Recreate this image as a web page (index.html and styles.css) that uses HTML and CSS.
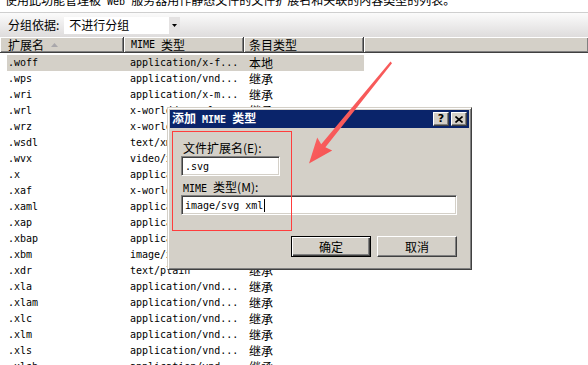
FILE: index.html
```html
<!DOCTYPE html>
<html lang="zh-CN">
<head>
<meta charset="utf-8">
<title>MIME 类型</title>
<link rel="stylesheet" href="styles.css">
</head>
<body>
<div class="page">
  <div class="desc"><span class="desc-text">使用此功能管理被<span class="mono"> Web </span>服务器用作静态文件的文件扩展名和关联的内容类型的列表。</span></div>
  <div class="toolbar">
    <span class="tlabel">分组依据:</span>
    <div class="combo">
      <span class="combo-text">不进行分组</span>
      <span class="combo-btn"><svg width="5" height="3" viewBox="0 0 5 3"><path d="M0 0H5L2.5 3Z" fill="#000"/></svg></span>
    </div>
  </div>
  <div class="header">
    <div class="hcell h1">扩展名<svg class="sort" width="7" height="4" viewBox="0 0 7 4"><path d="M0 4H7L3.5 0Z" fill="#a9a7ab"/></svg></div>
    <div class="hcell h2"><span class="mono">MIME&nbsp;</span>类型</div>
    <div class="hcell h3">条目类型</div>
    <div class="hcell h4"></div>
  </div>
  <div class="list">
    <div class="row sel"><span class="c1 mono">.woff</span><span class="c2 mono">application/x-f...</span><span class="c3">本地</span></div>
    <div class="row"><span class="c1 mono">.wps</span><span class="c2 mono">application/vnd...</span><span class="c3">继承</span></div>
    <div class="row"><span class="c1 mono">.wri</span><span class="c2 mono">application/x-m...</span><span class="c3">继承</span></div>
    <div class="row"><span class="c1 mono">.wrl</span><span class="c2 mono">x-world/x-vrml</span><span class="c3">继承</span></div>
    <div class="row"><span class="c1 mono">.wrz</span><span class="c2 mono">x-world/x-vrml</span><span class="c3">继承</span></div>
    <div class="row"><span class="c1 mono">.wsdl</span><span class="c2 mono">text/xml</span><span class="c3">继承</span></div>
    <div class="row"><span class="c1 mono">.wvx</span><span class="c2 mono">video/x-ms-wvx</span><span class="c3">继承</span></div>
    <div class="row"><span class="c1 mono">.x</span><span class="c2 mono">application/dir...</span><span class="c3">继承</span></div>
    <div class="row"><span class="c1 mono">.xaf</span><span class="c2 mono">x-world/x-vrml</span><span class="c3">继承</span></div>
    <div class="row"><span class="c1 mono">.xaml</span><span class="c2 mono">application/xam...</span><span class="c3">继承</span></div>
    <div class="row"><span class="c1 mono">.xap</span><span class="c2 mono">application/x-s...</span><span class="c3">继承</span></div>
    <div class="row"><span class="c1 mono">.xbap</span><span class="c2 mono">application/x-m...</span><span class="c3">继承</span></div>
    <div class="row"><span class="c1 mono">.xbm</span><span class="c2 mono">image/x-xbitmap</span><span class="c3">继承</span></div>
    <div class="row"><span class="c1 mono">.xdr</span><span class="c2 mono">text/plain</span><span class="c3">继承</span></div>
    <div class="row"><span class="c1 mono">.xla</span><span class="c2 mono">application/vnd...</span><span class="c3">继承</span></div>
    <div class="row"><span class="c1 mono">.xlam</span><span class="c2 mono">application/vnd...</span><span class="c3">继承</span></div>
    <div class="row"><span class="c1 mono">.xlc</span><span class="c2 mono">application/vnd...</span><span class="c3">继承</span></div>
    <div class="row"><span class="c1 mono">.xlm</span><span class="c2 mono">application/vnd...</span><span class="c3">继承</span></div>
    <div class="row"><span class="c1 mono">.xls</span><span class="c2 mono">application/vnd...</span><span class="c3">继承</span></div>
    <div class="row"><span class="c1 mono">.xlsb</span><span class="c2 mono">application/vnd...</span><span class="c3">继承</span></div>
  </div>

  <div class="dialog">
    <div class="titlebar">
      <span class="title">添加<span class="mono-b"> MIME </span>类型</span>
      <span class="tbtn q">?</span>
      <span class="tbtn x"><svg width="8" height="7" viewBox="0 0 8 7"><path d="M0.5 0.5L7.5 6.5M7.5 0.5L0.5 6.5" stroke="#000" stroke-width="1.6"/></svg></span>
    </div>
    <div class="dbody">
      <div class="flabel">文件扩展名(E):</div>
      <div class="field f1"><span class="mono">.svg</span></div>
      <div class="flabel l2"><span class="mono">MIME&nbsp;</span>类型(M):</div>
      <div class="field f2"><span class="mono">image/svg xml</span><span class="caret"></span></div>
      <div class="btnrow">
        <div class="btn ok">确定</div>
        <div class="btn">取消</div>
      </div>
    </div>
  </div>

  <div class="redbox"></div>
  <svg class="arrow" width="588" height="365" viewBox="0 0 588 365">
    <defs>
      <linearGradient id="ag" x1="0" y1="0" x2="1" y2="1">
        <stop offset="0" stop-color="#ff8080"/>
        <stop offset="1" stop-color="#f03434"/>
      </linearGradient>
    </defs>
    <polygon points="390.5,61.5 392,63.2 325.4,147.2 332.2,150.4 309,163.5 317.2,137.4 321.2,144.2" fill="url(#ag)"/>
  </svg>
</div>
</body>
</html>
```
FILE: styles.css
```css
html, body {
  margin: 0;
  padding: 0;
}
body {
  width: 588px;
  height: 365px;
  overflow: hidden;
  background: #fff;
  font-family: "Noto Sans CJK SC", "Noto Sans", sans-serif;
  font-size: 12px;
  color: #000;
}
.page {
  position: relative;
  width: 588px;
  height: 365px;
  overflow: hidden;
}
.mono {
  font-family: "DejaVu Sans Mono", "Liberation Mono", monospace;
  font-size: 10px;
}
.mono-b {
  font-family: "DejaVu Sans Mono", "Liberation Mono", monospace;
  font-size: 10px;
  font-weight: bold;
}
.desc {
  height: 12px;
  overflow: hidden;
  border-bottom: 1px solid #cfcfcf;
  padding-left: 5px;
}
.desc-text {
  display: block;
  line-height: 12px;
  margin-top: -6px;
  white-space: nowrap;
}
.toolbar {
  height: 24px;
  display: flex;
  align-items: center;
  padding-left: 8px;
  background: linear-gradient(#fbfbfb, #dedcdc);
}
.tlabel {
  line-height: 16px;
}
.combo {
  margin-left: 5px;
  width: 116px;
  height: 17px;
  background: #fff;
  display: flex;
  align-items: center;
  justify-content: space-between;
}
.combo-text {
  padding-left: 5px;
  line-height: 16px;
}
.combo-btn {
  width: 11px;
  height: 17px;
  background: #e4e2e2;
  display: flex;
  align-items: center;
  justify-content: center;
}
.header {
  display: grid;
  grid-template-columns: 124px 120px 120px 1fr;
  height: 16px;
}
.hcell {
  box-sizing: border-box;
  height: 16px;
  background: #d4d0c8;
  border-right: 1px solid #404040;
  border-bottom: 1px solid #404040;
  box-shadow: inset 1px 1px #fff, inset -1px -1px #808080;
  line-height: 15px;
  display: flex;
  align-items: center;
  white-space: nowrap;
}
.h1 { padding-left: 8px; }
.h2 { padding-left: 7px; }
.h3 { padding-left: 5px; }
.h4 { border-right: none; }
.sort {
  margin-left: 7px;
}
.list {
  padding-top: 2px;
  padding-left: 7px;
}
.row {
  display: grid;
  grid-template-columns: 117px 120px 120px;
  width: 357px;
  height: 16px;
  line-height: 16px;
  white-space: nowrap;
}
.row.sel {
  background: #d4d0c8;
}
.c1 { padding-left: 1px; }
.c2 { padding-left: 6px; }
.c3 { padding-left: 5px; }

.dialog {
  position: absolute;
  left: 167px;
  top: 107px;
  width: 305px;
  height: 163px;
  box-sizing: border-box;
  background: #d4d0c8;
  border: 1px solid;
  border-color: #d4d0c8 #404040 #404040 #d4d0c8;
  box-shadow: inset 1px 1px #fff, inset -1px -1px #808080;
  padding: 2px;
}
.titlebar {
  height: 18px;
  background: #0a246a;
  display: flex;
  align-items: center;
  padding: 0 2px;
}
.title {
  flex: 1;
  color: #fff;
  font-weight: bold;
  line-height: 16px;
  white-space: pre;
}
.tbtn {
  box-sizing: border-box;
  width: 16px;
  height: 14px;
  background: #d4d0c8;
  border: 1px solid;
  border-color: #fff #404040 #404040 #fff;
  box-shadow: inset -1px -1px #808080;
  display: flex;
  align-items: center;
  justify-content: center;
  font-family: "DejaVu Sans", "Liberation Sans", sans-serif;
  font-weight: bold;
  font-size: 11px;
  line-height: 12px;
}
.tbtn.x {
  margin-left: 2px;
}
.dbody {
  padding: 12px 12px 0 11px;
}
.flabel {
  height: 16px;
  line-height: 16px;
  padding-left: 2px;
  white-space: nowrap;
}
.flabel.l2 {
  margin-top: 3px;
}
.field {
  box-sizing: border-box;
  height: 20px;
  background: #fff;
  border: 1px solid;
  border-color: #808080 #fff #fff #808080;
  box-shadow: inset 1px 1px #404040, inset -1px -1px #d4d0c8;
  padding-left: 3px;
  display: flex;
  align-items: center;
  white-space: nowrap;
}
.f1 { width: 99px; }
.f2 { width: 276px; }
.caret {
  width: 1px;
  height: 13px;
  background: #000;
  margin-left: 1px;
}
.btnrow {
  margin-top: 21px;
  display: flex;
  justify-content: flex-end;
  gap: 6px;
}
.btn {
  box-sizing: border-box;
  width: 80px;
  height: 21px;
  border: 1px solid;
  border-color: #fff #404040 #404040 #fff;
  box-shadow: inset -1px -1px #808080;
  display: flex;
  align-items: center;
  justify-content: center;
  line-height: 16px;
}
.btn.ok {
  border: 1px solid #000;
  box-shadow: inset 1px 1px #fff, inset -1px -1px #404040, inset -2px -2px #808080;
}
.redbox {
  position: absolute;
  left: 172px;
  top: 131px;
  width: 120px;
  height: 100px;
  box-sizing: border-box;
  border: 1px solid #ff3d3d;
}
.arrow {
  position: absolute;
  left: 0;
  top: 0;
  pointer-events: none;
}
```
